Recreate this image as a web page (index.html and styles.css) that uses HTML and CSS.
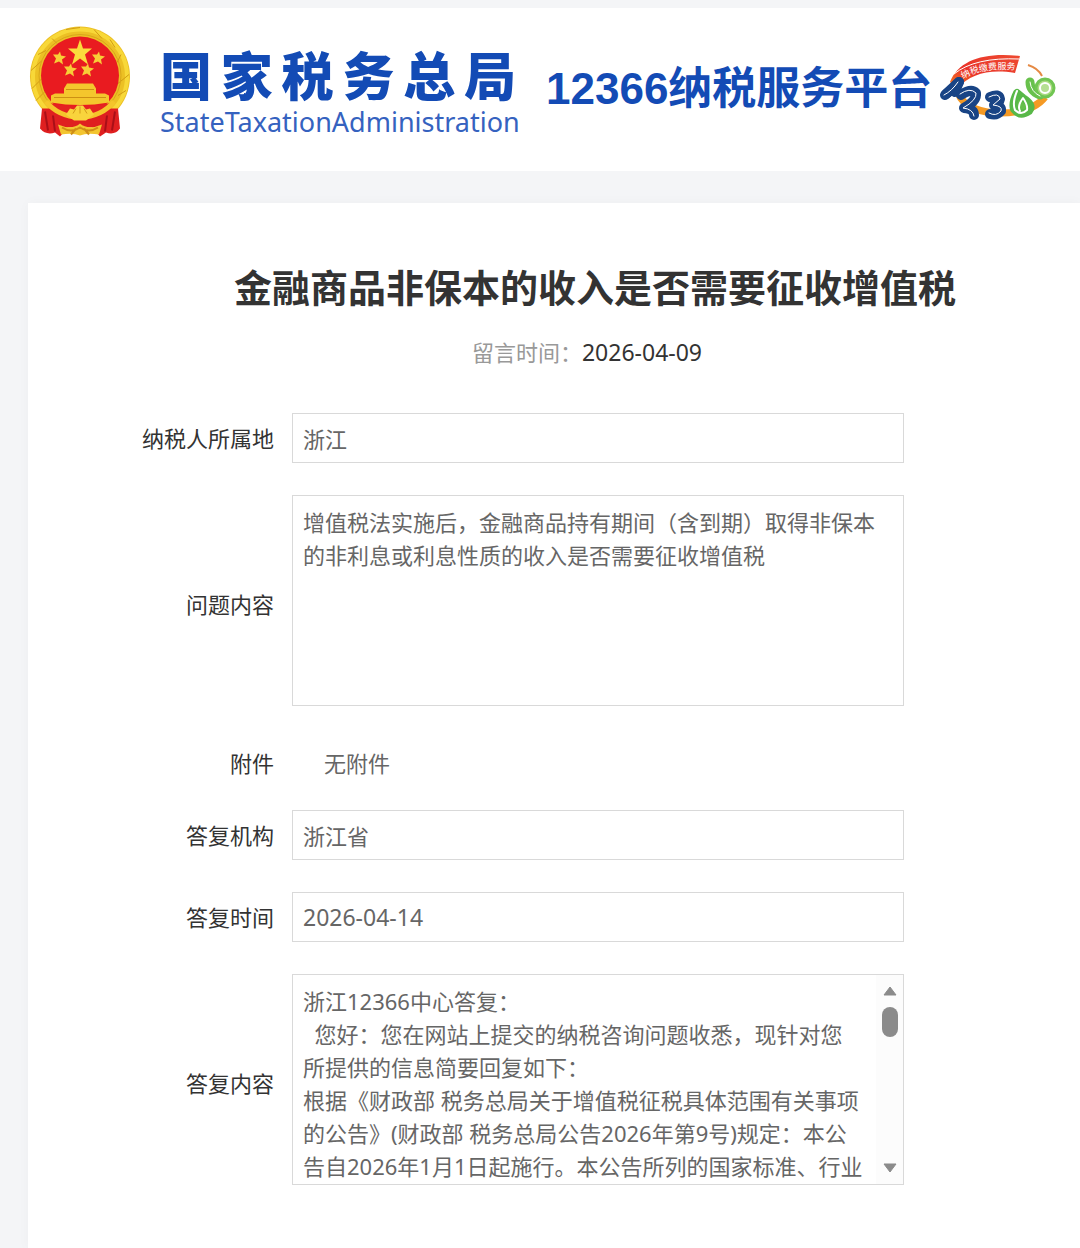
FILE: index.html
```html
<!DOCTYPE html>
<html lang="zh-CN">
<head>
<meta charset="utf-8">
<meta name="viewport" content="width=device-width, initial-scale=1">
<title>12366纳税服务平台</title>
<link rel="stylesheet" href="styles.css">
</head>
<body>
<header class="site-header">
  <svg class="emblem" viewBox="0 0 104 114" aria-hidden="true">
    <circle cx="52" cy="52" r="50" fill="#ecc024"/>
    <circle cx="52" cy="52" r="47" fill="none" stroke="#f8d838" stroke-width="4"/>
    <path d="M4 64l10-10M8 76l10-10M3 46l10-9M10 30l8-4M24 14l5 5M38 5l14-2M66 5l8 9M82 15l5 8M93 30l-4 8M101 50l-11 9M98 66l-8 5" stroke="#d29c14" stroke-width="1"/>
    <circle cx="52" cy="51" r="41" fill="none" stroke="#d9a51a" stroke-width="1"/>
    <path d="M14 84L12 104Q18 111 27 108L32 112 40 103H64L72 112 78 108Q87 111 92 104L90 84Z" fill="#df1f20"/>
    <path d="M17 87L20 106M25 91L27 107M79 91L77 107M87 87L84 106" stroke="#a90f17" stroke-width="2"/>
    <circle cx="52" cy="51" r="39" fill="#e91b20"/>
    <path d="M52 15l3 9h9l-7 6 3 10-8-6-8 6 3-10-7-6h9z" fill="#fbdc3c"/>
    <g fill="#f8ce37">
      <path id="small-star" d="M32 27l1 4 5 1-4 3 1 5-4-3-5 2 2-5-3-4h5z"/>
      <use href="#small-star" x="39"/>
      <use href="#small-star" x="11" y="12"/>
      <use href="#small-star" x="28" y="12"/>
    </g>
    <path d="M39 59h26l3 5v5h9l4 2v7q-29 5-58 0v-7l4-2h9v-5z" fill="#f4c62d"/>
    <path d="M38 65h28M26 73h52" stroke="#cd9013" stroke-width="1"/>
    <path d="M19 78q33 8 66 0l-7 10q-26 13-52 0z" fill="#e42221"/>
    <path d="M18 77q12 15 34 16 22-1 34-16" fill="none" stroke="#f5c52b" stroke-width="5"/>
    <path d="M38 90l4-6 4 1 3-4h6l3 4 4-1 4 6-8 6H46z" fill="#f9d43c"/>
    <path d="M45 89l3-5M52 89v-7M59 89l-3-5" stroke="#d39a18"/>
    <path d="M30 100q14 6 22-1 8 7 22 1l-3 10q-12-2-19 1-7-3-19-1z" fill="#f3c530"/>
    <path d="M34 103q9 6 18 0 9 6 18 0M43 110l5-6M61 110l-5-6" fill="none" stroke="#cf8e15" stroke-width="2"/>
  </svg>
  <div class="agency">
    <div class="agency-cn"><span>国</span><span>家</span><span>税</span><span>务</span><span>总</span><span>局</span></div>
    <div class="agency-en">StateTaxationAdministration</div>
  </div>
  <div class="platform">12366纳税服务平台</div>
  <svg class="hotline" viewBox="12 8 116 72" role="img" aria-label="12366">
    <defs>
      <linearGradient id="arch" x1="0" y1="1" x2="1" y2="0"><stop stop-color="#f6841f"/><stop offset=".4" stop-color="#e9332a"/><stop offset="1" stop-color="#ee4a30"/></linearGradient>
      <path id="slogan" d="M35 34Q55 22 88 25"/>
    </defs>
    <path d="M29 44Q33 65 67 68 104 69 117 52" fill="none" stroke="#f59a24" stroke-width="7"/>
    <path d="M100 20Q110 23 114 31" fill="none" stroke="#e58a45" stroke-width="2"/>
    <path d="M22 37C31 15 56 7 92 11L87 28C62 24 43 28 29 44Z" fill="url(#arch)"/>
    <path d="M26 29Q47 12 91 14" fill="none" stroke="#fff" stroke-width="1"/>
    <text class="slogan"><textPath href="#slogan">纳税缴费服务</textPath></text>
    <g fill="none" stroke-linecap="round" stroke-linejoin="round">
      <g stroke="#194485" stroke-width="10">
        <path d="M17 50Q24 45 31 37"/>
        <path d="M18 49L31 37 27 47"/>
        <path d="M33 50Q43 43 48 48 49 56 36 63 46 64 46 70"/>
        <path d="M62 52Q71 48 72 54 71 59 66 60 74 61 73 66 69 71 62 69"/>
      </g>
      <path d="M16 50Q24 46 30 37M32 49Q42 42 48 48 49 55 35 63 45 64 46 71M61 52Q71 47 72 54L65 60Q75 61 73 66 68 72 61 68" stroke="#fff" stroke-width="1"/>
      <path d="M89 48Q84 58 86 64 92 72 101 66 106 60 95 53Z" fill="#65bf4c" stroke="#58b848" stroke-width="8"/>
      <path d="M89 46Q84 58 87 65 93 71 99 65 100 60 95 53 89 61 92 66" stroke="#fff" stroke-width="2"/>
      <path d="M102 37Q102 46 112 50" stroke="#68c14c" stroke-width="9"/>
      <circle cx="117" cy="43" r="9" fill="#a8d97f" stroke="#70c552" stroke-width="3"/>
      <circle cx="117" cy="43" r="5" fill="#b5df92" stroke="#fff" stroke-width="2"/>
      <path d="M102 37Q103 47 112 51" stroke="#fff" stroke-width="1"/>
    </g>
  </svg>
</header>
<main class="card">
  <h1 class="title">金融商品非保本的收入是否需要征收增值税</h1>
  <p class="posted">留言时间：<time class="posted-date" datetime="2026-04-09">2026-04-09</time></p>
  <form class="form">
    <div class="row">
      <label class="label" for="region">纳税人所属地</label>
      <input class="field" id="region" type="text" value="浙江" readonly>
    </div>
    <div class="row">
      <label class="label label-area" for="question">问题内容</label>
      <textarea class="field area" id="question" readonly>增值税法实施后，金融商品持有期间（含到期）取得非保本的非利息或利息性质的收入是否需要征收增值税</textarea>
    </div>
    <div class="row row-attachment">
      <label class="label" for="attachment">附件</label>
      <output class="attachment" id="attachment">无附件</output>
    </div>
    <div class="row">
      <label class="label" for="office">答复机构</label>
      <input class="field" id="office" type="text" value="浙江省" readonly>
    </div>
    <div class="row">
      <label class="label" for="reply-date">答复时间</label>
      <input class="field field-date" id="reply-date" type="text" value="2026-04-14" readonly>
    </div>
    <div class="row">
      <label class="label label-area" for="reply">答复内容</label>
      <div class="scroll-box">
        <textarea class="field area area-scroll" id="reply" readonly>浙江12366中心答复：
  您好：您在网站上提交的纳税咨询问题收悉，现针对您
所提供的信息简要回复如下：
根据《财政部 税务总局关于增值税征税具体范围有关事项的公告》(财政部 税务总局公告2026年第9号)规定：本公告自2026年1月1日起施行。本公告所列的国家标准、行业</textarea>
        <div class="scrollbar" aria-hidden="true">
          <svg class="arrow" viewBox="0 0 14 10"><path d="M7 1L13 9H1Z"/></svg>
          <span class="thumb"></span>
          <svg class="arrow arrow-down" viewBox="0 0 14 10"><path d="M7 9L1 1H13Z"/></svg>
        </div>
      </div>
    </div>
  </form>
</main>
</body>
</html>
```
FILE: styles.css
```css
* {
  box-sizing: border-box;
}

body {
  margin: 0;
  padding-top: 8px;
  min-height: 100vh;
  display: flex;
  flex-direction: column;
  background: #f4f5f7;
  color: #333;
  font: 22px/33px "Noto Sans", "Noto Sans CJK SC", sans-serif;
}

.site-header {
  display: flex;
  align-items: flex-start;
  padding: 16px 22px 32px 28px;
  background: #fff;
  color: #134bb5;
  white-space: nowrap;
}

.emblem {
  flex: none;
  width: 104px;
  height: 115px;
}

.agency {
  width: 356px;
  margin: 20px 32px 0 28px;
}

.agency-cn {
  display: flex;
  justify-content: space-between;
  font: 900 52px/60px "Noto Sans CJK SC", sans-serif;
}

.agency-en {
  margin-top: 4px;
  font-size: 27px;
  line-height: 28px;
  color: #3562bf;
}

.platform {
  margin: 37px 8px 0 -2px;
  font: bold 44px/56px "Liberation Sans", "Noto Sans CJK SC", sans-serif;
}

.hotline {
  flex: none;
  width: 116px;
  height: 72px;
  margin-top: 29px;
}

.slogan {
  fill: #fff;
  font: 9px "Noto Sans CJK SC", sans-serif;
}

.card {
  flex: 1;
  margin: 32px 0 0 28px;
  padding: 53px 0 64px 82px;
  background: #fff;
  box-shadow: 0 0 12px rgba(0, 0, 0, 0.03);
}

.title {
  margin: 0;
  font: bold 38px/60px "Noto Sans CJK SC", sans-serif;
  text-align: center;
}

.posted {
  margin: 20px 16px 44px 0;
  color: #999;
  text-align: center;
}

.posted-date {
  font-size: 23px;
  color: #333;
}

.form {
  display: flex;
  flex-direction: column;
  gap: 32px;
  padding-right: 176px;
}

.row {
  display: flex;
  align-items: center;
  gap: 18px;
}

.row-attachment {
  height: 50px;
  margin-bottom: -10px;
}

.label {
  flex: none;
  width: 164px;
  text-align: right;
}

.label-area {
  padding-top: 8px;
}

.field {
  display: block;
  flex: 1;
  min-width: 0;
  width: 100%;
  height: 50px;
  margin: 0;
  padding: 0 10px;
  border: 1px solid #d9d9d9;
  border-radius: 0;
  outline: 0;
  background: #fff;
  color: #666;
  font: inherit;
}

.field-date {
  font-size: 23px;
}

.area {
  height: 211px;
  padding: 10px 10px 0;
  resize: none;
  overflow: hidden;
}

.attachment {
  padding-left: 32px;
  color: #666;
}

.scroll-box {
  position: relative;
  flex: 1;
}

.area-scroll {
  padding-right: 36px;
  overflow-y: auto;
  scrollbar-width: none;
}

.scrollbar {
  position: absolute;
  inset: 1px 1px 1px auto;
  display: flex;
  flex-direction: column;
  align-items: center;
  width: 27px;
  padding: 11px 0;
  background: #fcfcfc;
}

.arrow {
  width: 14px;
  height: 10px;
  fill: #8b8b8b;
  stroke: #8b8b8b;
  stroke-width: 1;
  stroke-linejoin: round;
}

.arrow-down {
  margin-top: auto;
}

.thumb {
  width: 16px;
  height: 30px;
  margin-top: 11px;
  border-radius: 8px;
  background: #8b8b8b;
}
```
